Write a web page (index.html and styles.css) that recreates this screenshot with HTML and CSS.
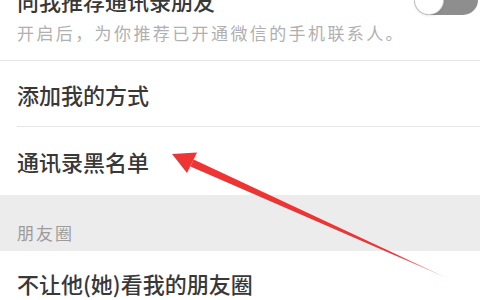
FILE: index.html
```html
<!DOCTYPE html>
<html lang="zh-CN">
<head>
<meta charset="utf-8">
<title>设置</title>
<link rel="stylesheet" href="styles.css">
</head>
<body>
<div class="page">
  <div class="cell cell-toggle">
    <div class="cell-head">
      <span class="cell-title">向我推荐通讯录朋友</span>
      <span class="switch"><span class="knob"></span></span>
    </div>
    <div class="cell-desc">开启后，为你推荐已开通微信的手机联系人。</div>
  </div>
  <div class="cell cell-item cell-first"><span class="cell-title">添加我的方式</span></div>
  <div class="cell cell-item cell-second"><span class="cell-title">通讯录黑名单</span></div>
  <div class="section-label">朋友圈</div>
  <div class="cell cell-item cell-last"><span class="cell-title">不让他(她)看我的朋友圈</span></div>

  <svg class="arrow" width="480" height="300" viewBox="0 0 480 300">
    <defs>
      <linearGradient id="fade" x1="192" y1="163" x2="447" y2="278" gradientUnits="userSpaceOnUse">
        <stop offset="0" stop-color="#ef3434"/>
        <stop offset="0.8" stop-color="#e83636"/>
        <stop offset="1" stop-color="#e87a80" stop-opacity="0.5"/>
      </linearGradient>
    </defs>
    <polygon points="193.6,159.5 190.4,166.5 447,278" fill="url(#fade)"/>
    <polygon points="172,154 197,152.5 187,173" fill="#ef3434"/>
  </svg>
</div>
</body>
</html>
```
FILE: styles.css
```css
html, body {
  margin: 0;
  padding: 0;
  background: #ffffff;
}
.page {
  position: relative;
  width: 480px;
  height: 300px;
  overflow: hidden;
  font-family: "Noto Sans CJK SC", "Noto Sans", sans-serif;
}
.cell {
  position: relative;
  padding-left: 17px;
  background: #ffffff;
}
.cell-title {
  font-size: 22px;
  line-height: 28px;
  color: #383838;
  font-weight: 500;
}
.cell-toggle {
  margin-top: -14px;
  height: 75px;
  border-bottom: 1px solid #e6e6e6;
  box-sizing: border-box;
  display: flex;
  flex-direction: column;
}
.cell-head {
  display: flex;
  justify-content: space-between;
  align-items: center;
  height: 28px;
}
.cell-desc {
  margin-top: 7px;
  font-size: 17px;
  line-height: 24px;
  letter-spacing: 2.4px;
  color: #b0b0b0;
}
.switch {
  position: relative;
  width: 64px;
  height: 30px;
  margin-right: 2px;
  border-radius: 15px;
  background: #8e8e8e;
}
.knob {
  position: absolute;
  left: 1px;
  top: 1px;
  width: 28px;
  height: 28px;
  border-radius: 50%;
  background: #ffffff;
  box-shadow: 0 0 0 1px #cfcfcf, 0 1px 3px rgba(0,0,0,0.2);
}
.cell-item {
  display: flex;
  align-items: center;
  box-sizing: border-box;
}
.cell-first {
  height: 66px;
}
.cell-first::after {
  content: "";
  position: absolute;
  left: 17px;
  right: 0;
  bottom: 0;
  height: 1px;
  background: #e6e6e6;
}
.cell-second {
  height: 68px;
}
.cell-last {
  height: 64px;
}
.section-label {
  height: 56px;
  box-sizing: border-box;
  padding: 27px 0 0 17px;
  background: #ececec;
  font-size: 17px;
  line-height: 22px;
  letter-spacing: 2px;
  color: #9c9c9c;
}
.arrow {
  position: absolute;
  left: 0;
  top: 0;
  pointer-events: none;
}
```
